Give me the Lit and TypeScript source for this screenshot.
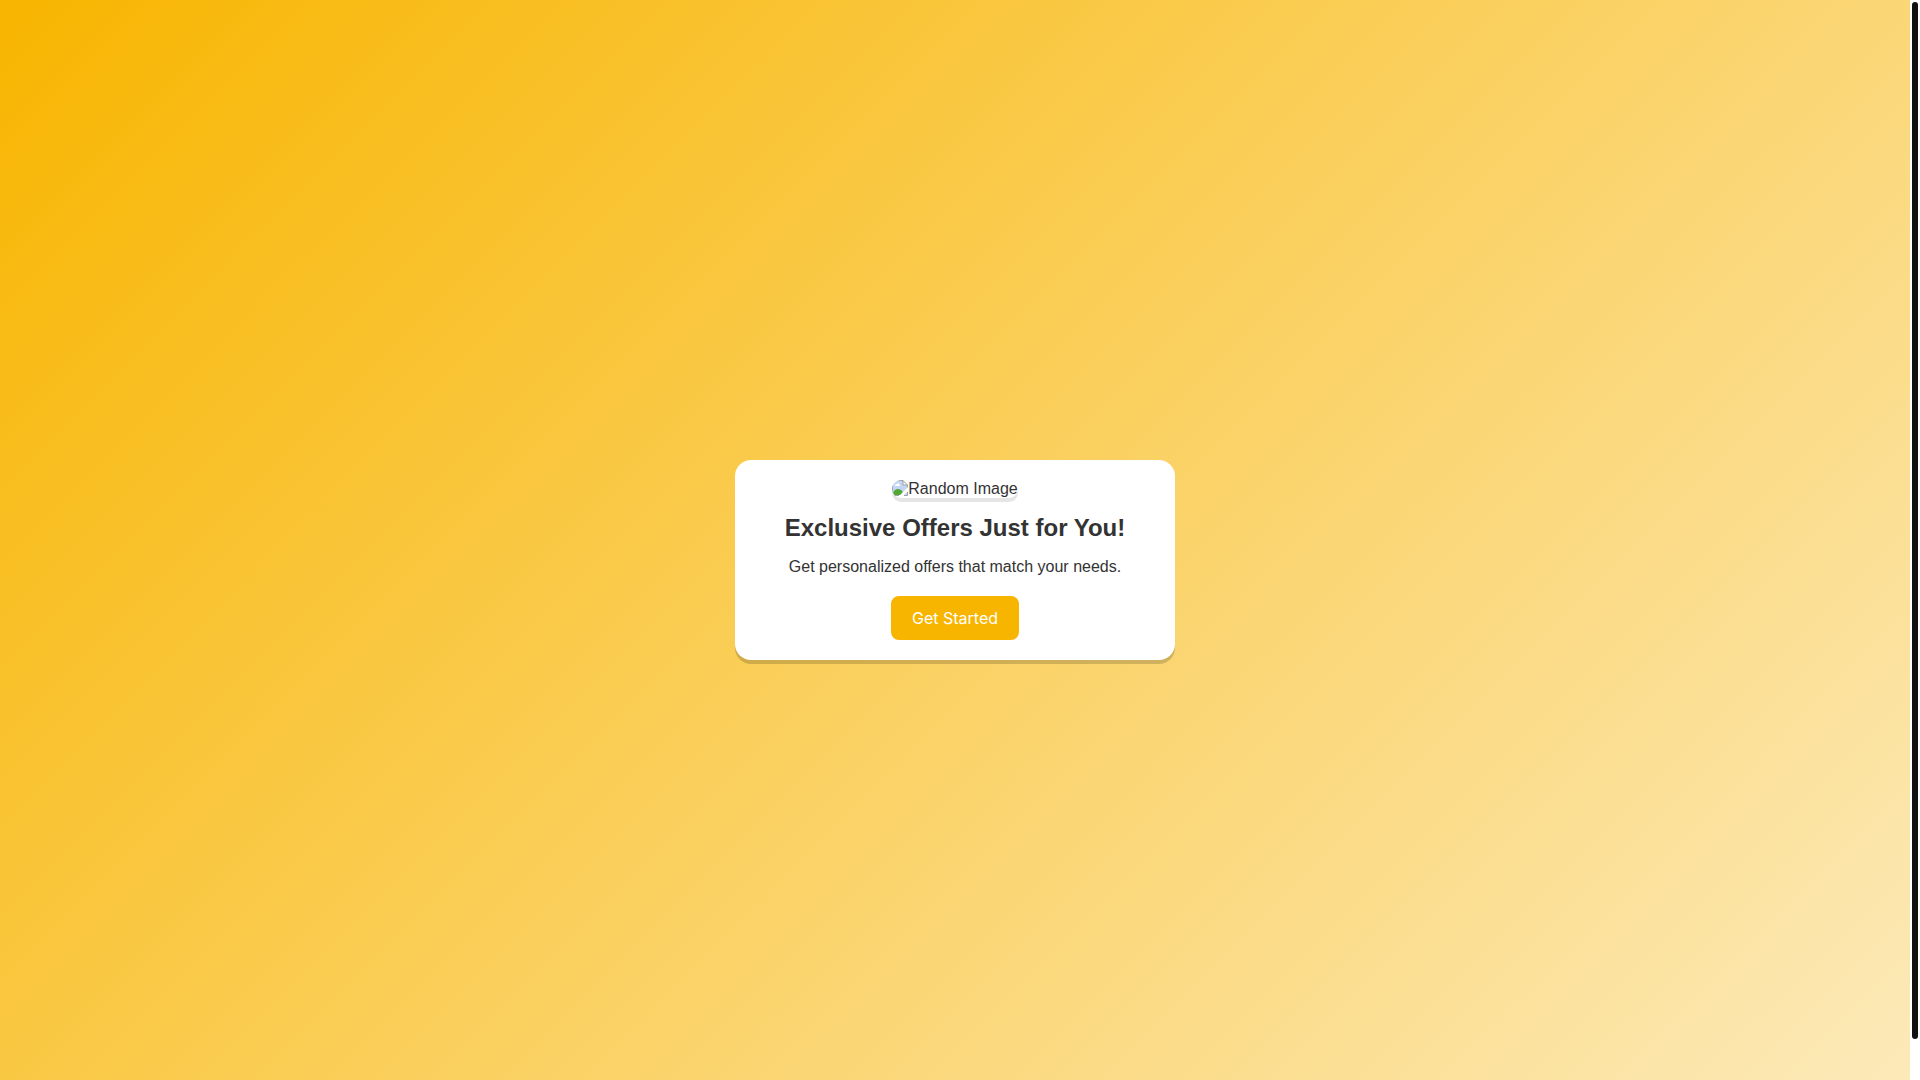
import { LitElement, html, css } from "lit";
import { customElement } from "lit/decorators.js";

@customElement("app-root")
export class AppRoot extends LitElement {
  static styles = css`
    :host {
      display: block;
      font-family: "Liberation Sans", Arial, sans-serif;
      font-size: 16px;
      color: #333;
    }
    .viewport {
      display: flex;
      height: 100vh;
      overflow: hidden;
      background: #fff;
    }
    .page {
      flex: 1;
      display: flex;
      align-items: center;
      justify-content: center;
      align-self: flex-start;
      min-height: 100vh;
      padding: 20px;
      background: linear-gradient(135deg, #f8b500, #fceabb);
    }
    .track {
      flex: none;
      box-sizing: border-box;
      width: 10px;
      padding: 2px;
    }
    .thumb {
      height: calc(100% - 39px);
      border-radius: 3px;
      background: #111;
    }
    .card {
      display: flex;
      flex-direction: column;
      align-items: center;
      box-sizing: border-box;
      width: 100%;
      max-width: 440px;
      padding: 20px;
      border-radius: 16px;
      background: #fff;
      box-shadow: 0 4px 0 rgba(0, 0, 0, 0.17);
      text-align: center;
    }
    .picture {
      display: flex;
      height: 18px;
      line-height: 18px;
      border-radius: 10px;
      overflow: hidden;
      box-shadow: 0 4px 0 rgba(0, 0, 0, 0.1);
    }
    .missing {
      flex: none;
      display: block;
      width: 16px;
      height: 16px;
    }
    .title {
      margin: 16px 0;
      font-size: 24px;
      line-height: 28px;
    }
    .text {
      margin: 0 0 20px;
      line-height: 18px;
    }
    .button {
      padding: 12px 21px;
      border: none;
      border-radius: 8px;
      background: #f8b500;
      color: #fff;
      font-family: Inter, sans-serif;
      font-size: 16px;
      line-height: 20px;
      cursor: pointer;
    }
  `;

  render() {
    return html`
      <div class="viewport">
        <main class="page">
          <section class="card">
            <div class="picture">
              <svg class="missing" viewBox="0 0 16 16" aria-hidden="true">
                <path d="M1 1h10l4 4v10H1z" fill="#c3d5f7" />
                <path d="M3 6c0-2 1-2 2-2 1-2 3 0 3 2z" fill="#fff" />
                <path d="M1 15v-2c1-3 3-4 5-4 3 0 5 2 6 6z" fill="#4ea832" />
                <path d="M16 7v4l-5 5H7z" fill="#fff" />
                <path d="M11 1v4h4z" fill="#fff" />
                <path d="M.5 15.500V.5H11L15.500 5v2.500M11 .5V5h4.500M.5 15.500H7M12 15.500h3.500V12" fill="none" stroke="#a0a0a0" />
              </svg>
              <span>Random Image</span>
            </div>
            <h2 class="title">Exclusive Offers Just for You!</h2>
            <p class="text">Get personalized offers that match your needs.</p>
            <button class="button" type="button">Get Started</button>
          </section>
        </main>
        <div class="track" aria-hidden="true"><div class="thumb"></div></div>
      </div>
    `;
  }
}
